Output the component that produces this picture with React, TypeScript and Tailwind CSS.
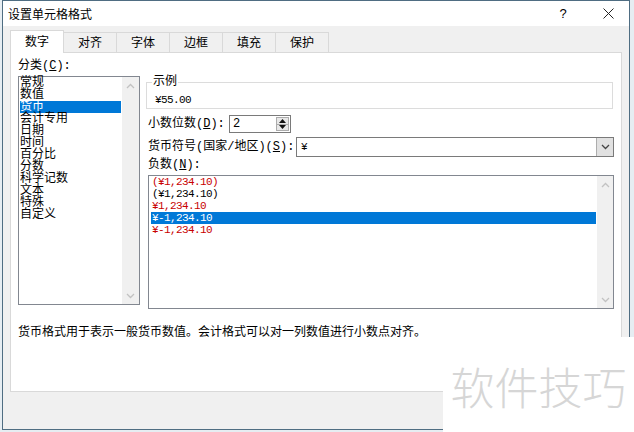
import React from "react";

const categories = [
  "常规",
  "数值",
  "货币",
  "会计专用",
  "日期",
  "时间",
  "百分比",
  "分数",
  "科学记数",
  "文本",
  "特殊",
  "自定义",
];

const negatives = [
  { text: "(¥1,234.10)", red: true },
  { text: "(¥1,234.10)", red: false },
  { text: "¥1,234.10", red: true },
  { text: "¥-1,234.10", red: false, selected: true },
  { text: "¥-1,234.10", red: true },
];

const tabs = ["对齐", "字体", "边框", "填充", "保护"];

function Chevron({ up, className }: { up?: boolean; className?: string }) {
  return (
    <svg width="9" height="6" viewBox="0 0 9 6" className={className}>
      <polyline
        points={up ? "1,5 4.5,1.5 8,5" : "1,1 4.5,4.5 8,1"}
        fill="none"
        stroke="currentColor"
        strokeWidth="1.3"
      />
    </svg>
  );
}

function Scrollbar({ width }: { width: string }) {
  return (
    <div
      className={`flex h-full flex-col justify-between bg-[#f0f0f0] text-[#c2c2c2] ${width}`}
    >
      <div className="flex h-[17px] items-center justify-center">
        <Chevron up />
      </div>
      <div className="flex h-[17px] items-center justify-center">
        <Chevron />
      </div>
    </div>
  );
}

function Key({ k }: { k: string }) {
  return <span className="underline underline-offset-1">{k}</span>;
}

export default function App() {
  return (
    <div className="relative h-[432px] w-[634px] overflow-hidden bg-[#e6edf2] font-['Liberation_Mono','Noto_Sans_CJK_SC',monospace] text-[12px] text-black">
      <div className="ml-[2px] flex h-[430px] w-[628px] flex-col border border-[#4f6d82] bg-[#f0f0f0]">
        {/* title bar */}
        <div className="flex h-[25px] items-center bg-white">
          <span className="pl-[5px] font-['Noto_Sans_CJK_SC',sans-serif] leading-[14px]">
            设置单元格格式
          </span>
          <span className="ml-auto mr-[16px] w-[16px] text-center font-['Liberation_Sans',sans-serif] text-[13px]">
            ?
          </span>
          <div className="flex w-[42px] items-center justify-center">
            <svg width="11" height="11" viewBox="0 0 11 11">
              <path d="M0.5 0.5 L10.5 10.5 M10.5 0.5 L0.5 10.5" stroke="#222" strokeWidth="1" />
            </svg>
          </div>
        </div>

        {/* tabs */}
        <div className="flex h-[26px] items-end pl-[7px]">
          <div className="relative z-10 -mb-px flex h-[23px] w-[54px] items-center justify-center border border-b-0 border-[#d9d9d9] bg-white pt-[2px]">
            数字
          </div>
          {tabs.map((t) => (
            <div
              key={t}
              className="flex h-[20px] w-[53px] items-center justify-center border-r border-t border-[#d9d9d9] pt-[3px]"
            >
              {t}
            </div>
          ))}
        </div>

        {/* panel */}
        <div className="ml-[7px] flex h-[340px] w-[612px] flex-col border border-[#d9d9d9] bg-white pl-[7px] pt-[6px]">
          <div className="flex">
            {/* category */}
            <div className="flex w-[122px] flex-col">
              <span className="h-[14px] leading-[14px]">
                分类(<Key k="C" />):
              </span>
              <div className="mt-[3px] flex h-[229px] border border-[#828790] bg-white">
                <div className="flex-1 pl-[1px] pr-[1px]">
                  {categories.map((c) => (
                    <div
                      key={c}
                      className={
                        c === "货币"
                          ? "h-[12px] bg-[#0078d7] leading-[12px] text-white"
                          : "h-[12px] leading-[12px]"
                      }
                    >
                      {c}
                    </div>
                  ))}
                </div>
                <Scrollbar width="w-[17px]" />
              </div>
            </div>

            {/* right column */}
            <div className="ml-[6px] flex w-[468px] flex-col">
              <fieldset className="mt-[17px] w-[467px] border border-[#dcdcdc] pb-[2px]">
                <legend className="ml-[5px] px-[1px] leading-[12px]">示例</legend>
                <p className="mt-[6px] pl-[8px] text-[11px] leading-[12px] tracking-[-0.6px]">
                  ¥55.00
                </p>
              </fieldset>

              <div className="mt-[6px] flex h-[18px] items-center">
                <span className="ml-[2px] w-[81px]">
                  小数位数(<Key k="D" />):
                </span>
                <div className="flex h-[18px] w-[62px] border border-[#7a7a7a] bg-white">
                  <span className="flex-1 pl-[3px] leading-[16px]">2</span>
                  <div className="m-[1px] flex w-[13px] flex-col border border-[#acacac] bg-[#e8e8e8]">
                    <div className="flex flex-1 items-center justify-center border-b border-[#acacac]">
                      <svg width="7" height="4" viewBox="0 0 7 4">
                        <polygon points="0,4 3.5,0 7,4" fill="#111" />
                      </svg>
                    </div>
                    <div className="flex flex-1 items-center justify-center">
                      <svg width="7" height="4" viewBox="0 0 7 4">
                        <polygon points="0,0 3.5,4 7,0" fill="#111" />
                      </svg>
                    </div>
                  </div>
                </div>
              </div>

              <div className="mt-[4px] flex h-[20px] items-center">
                <span className="ml-[2px] w-[148px]">
                  货币符号(国家/地区)(<Key k="S" />):
                </span>
                <div className="flex h-[20px] flex-1 border border-[#7a7a7a] bg-white">
                  <span className="flex-1 pl-[4px] text-[11px] leading-[18px]">¥</span>
                  <div className="flex w-[17px] items-center justify-center border-l border-[#adadad] bg-[#e1e1e1] text-[#444]">
                    <Chevron />
                  </div>
                </div>
              </div>

              <span className="ml-[2px] mt-[2px] h-[12px] leading-[12px]">
                负数(<Key k="N" />):
              </span>
              <div className="ml-[2px] mt-[4px] flex h-[134px] border border-[#828790] bg-white">
                <div className="flex-1 pl-[2px] pr-[1px]">
                  {negatives.map((n, i) => (
                    <div
                      key={i}
                      className={
                        n.selected
                          ? "h-[12px] bg-[#0078d7] pl-[1px] text-[11px] leading-[12px] tracking-[-0.6px] text-white"
                          : n.red
                            ? "h-[12px] pl-[1px] text-[11px] leading-[12px] tracking-[-0.6px] text-[#c80000]"
                            : "h-[12px] pl-[1px] text-[11px] leading-[12px] tracking-[-0.6px] text-black"
                      }
                    >
                      {n.text}
                    </div>
                  ))}
                </div>
                <Scrollbar width="w-[16px]" />
              </div>
            </div>
          </div>

          <p className="mt-[16px] font-['Noto_Sans_CJK_SC',sans-serif] leading-[12px]">
            货币格式用于表示一般货币数值。会计格式可以对一列数值进行小数点对齐。
          </p>
        </div>
      </div>

      {/* watermark */}
      <div className="absolute bottom-0 right-0 flex h-[95px] w-[191px] items-center justify-center bg-white pt-[2px]">
        <span className="font-['Noto_Sans_CJK_SC',sans-serif] text-[44px] font-light leading-[44px] text-[#d6d6d6]">
          软件技巧
        </span>
      </div>
    </div>
  );
}
